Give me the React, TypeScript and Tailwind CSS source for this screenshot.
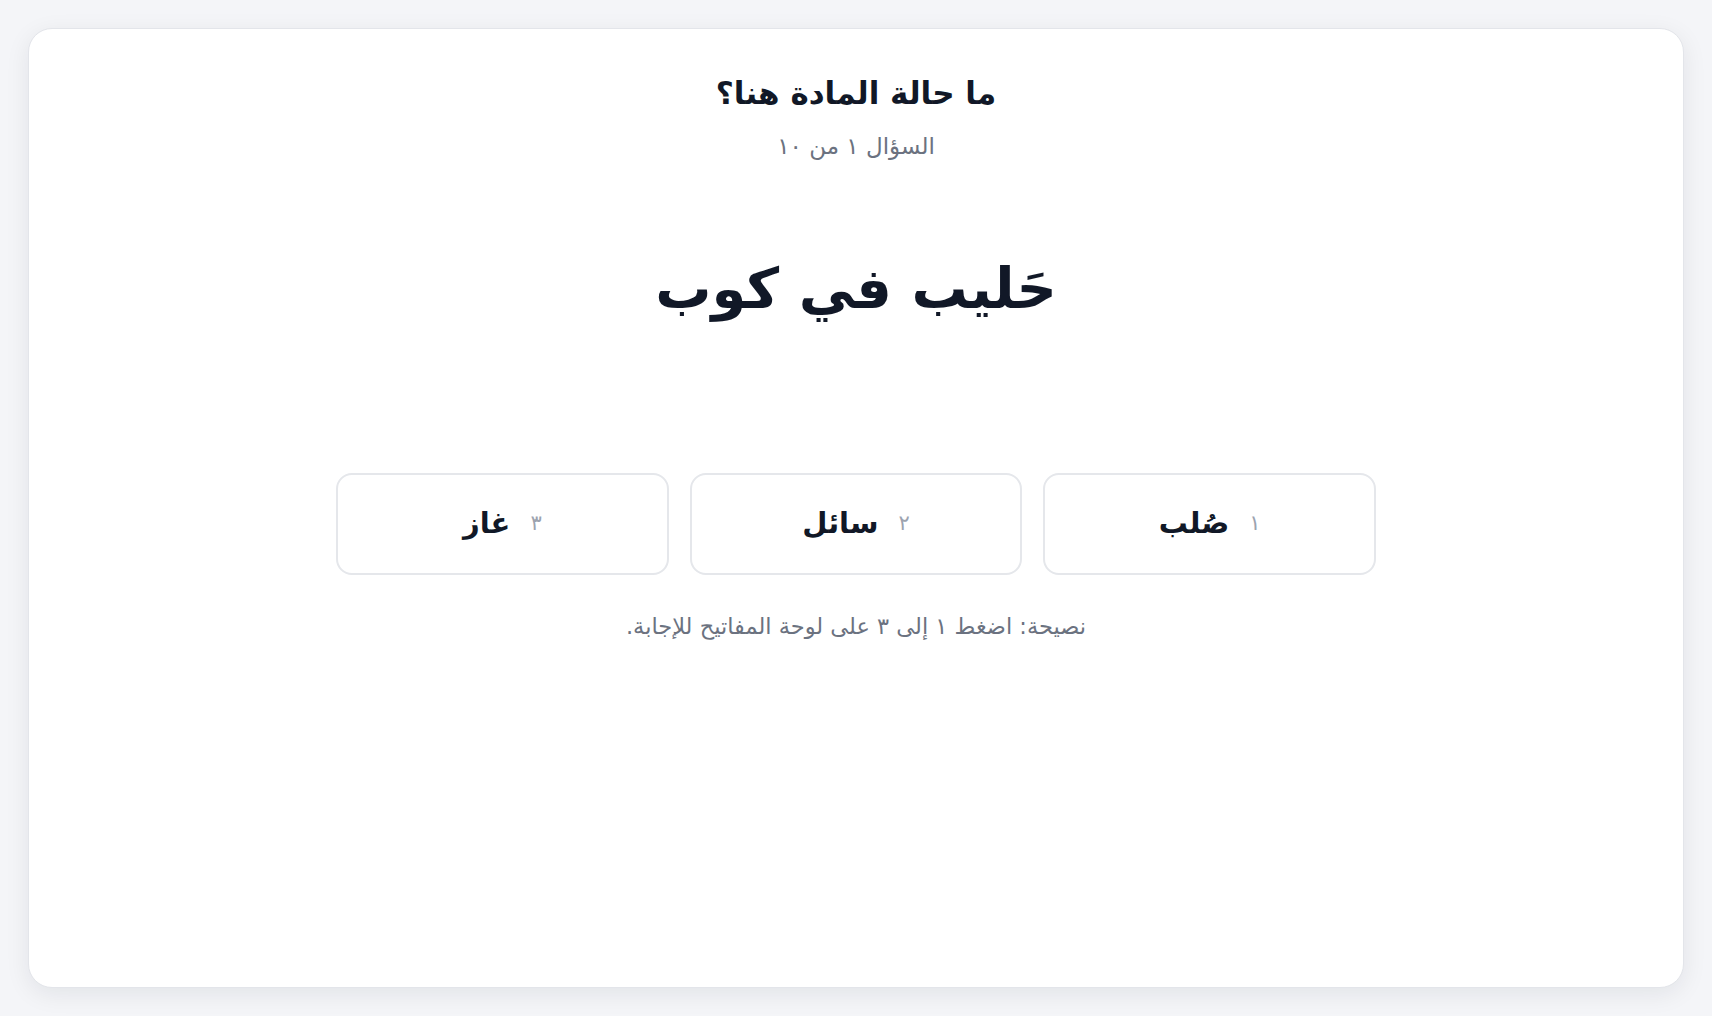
import React from "react";

const options = [
  { n: "١", label: "صُلب" },
  { n: "٢", label: "سائل" },
  { n: "٣", label: "غاز" },
];

export default function App() {
  return (
    <div
      dir="rtl"
      className="min-h-screen w-full bg-[#f4f5f8] p-7"
      style={{ fontFamily: '"DejaVu Sans", "Noto Sans", sans-serif' }}
    >
      <div className="flex h-[960px] flex-col items-center rounded-3xl border border-[#e3e5ea] bg-white pt-[43px] shadow-[0_6px_24px_rgba(17,24,39,0.08)]">
        <h1 className="text-[31px] font-bold leading-[42px] text-[#111827]">ما حالة المادة هنا؟</h1>
        <p className="mt-[18px] text-[23px] leading-7 text-[#6b7280]">السؤال ١ من ١٠</p>
        <div className="mt-[91px] text-[56px] font-bold leading-[75px] text-[#111827]">حَليب في كوب</div>
        <div className="mt-[147px] grid w-[1040px] grid-cols-3 gap-[21px]">
          {options.map((o) => (
            <button
              key={o.n}
              className="flex h-[102px] items-center justify-center gap-5 rounded-2xl border-2 border-[#e5e7eb] bg-white"
            >
              <span className="text-[21px] text-[#9ca3af]">{o.n}</span>
              <span className="text-[29px] font-bold text-[#111827]">{o.label}</span>
            </button>
          ))}
        </div>
        <p className="mt-[37px] text-[22.5px] leading-7 text-[#6b7280]">نصيحة: اضغط ١ إلى ٣ على لوحة المفاتيح للإجابة.</p>
      </div>
    </div>
  );
}
